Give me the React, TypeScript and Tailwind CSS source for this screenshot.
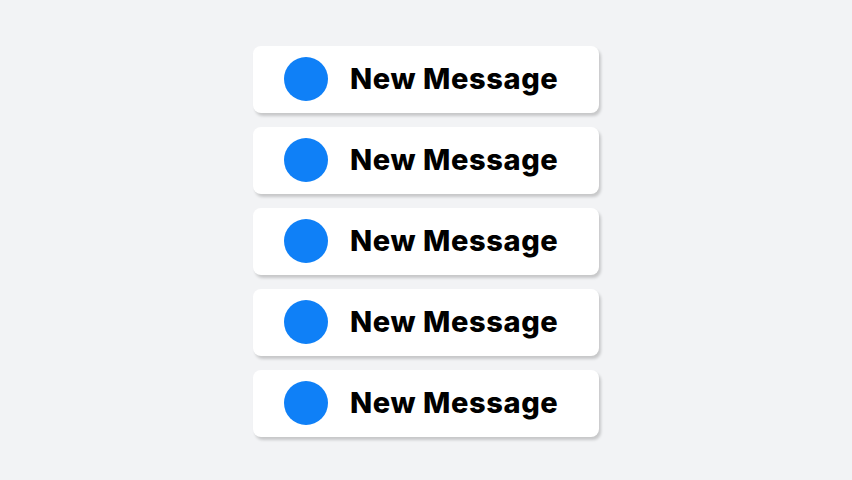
export default function App() {
  const items = [1, 2, 3, 4, 5];
  return (
    <div className="w-[852px] h-[480px] bg-[#f2f3f5] flex flex-col items-center justify-center gap-[14px] pt-[2px]">
      {items.map((i) => (
        <div
          key={i}
          className="w-[346px] h-[67px] bg-white rounded-[8px] shadow-[2px_3px_3px_rgba(0,0,0,0.18)] flex items-center pl-[31px]"
        >
          <div className="w-[44px] h-[44px] rounded-full bg-[#0f80f7] flex-shrink-0" />
          <span className="ml-[22px] text-[29px] font-extrabold text-black tracking-[0.6px] font-['Inter',sans-serif]">
            New Message
          </span>
        </div>
      ))}
    </div>
  );
}
